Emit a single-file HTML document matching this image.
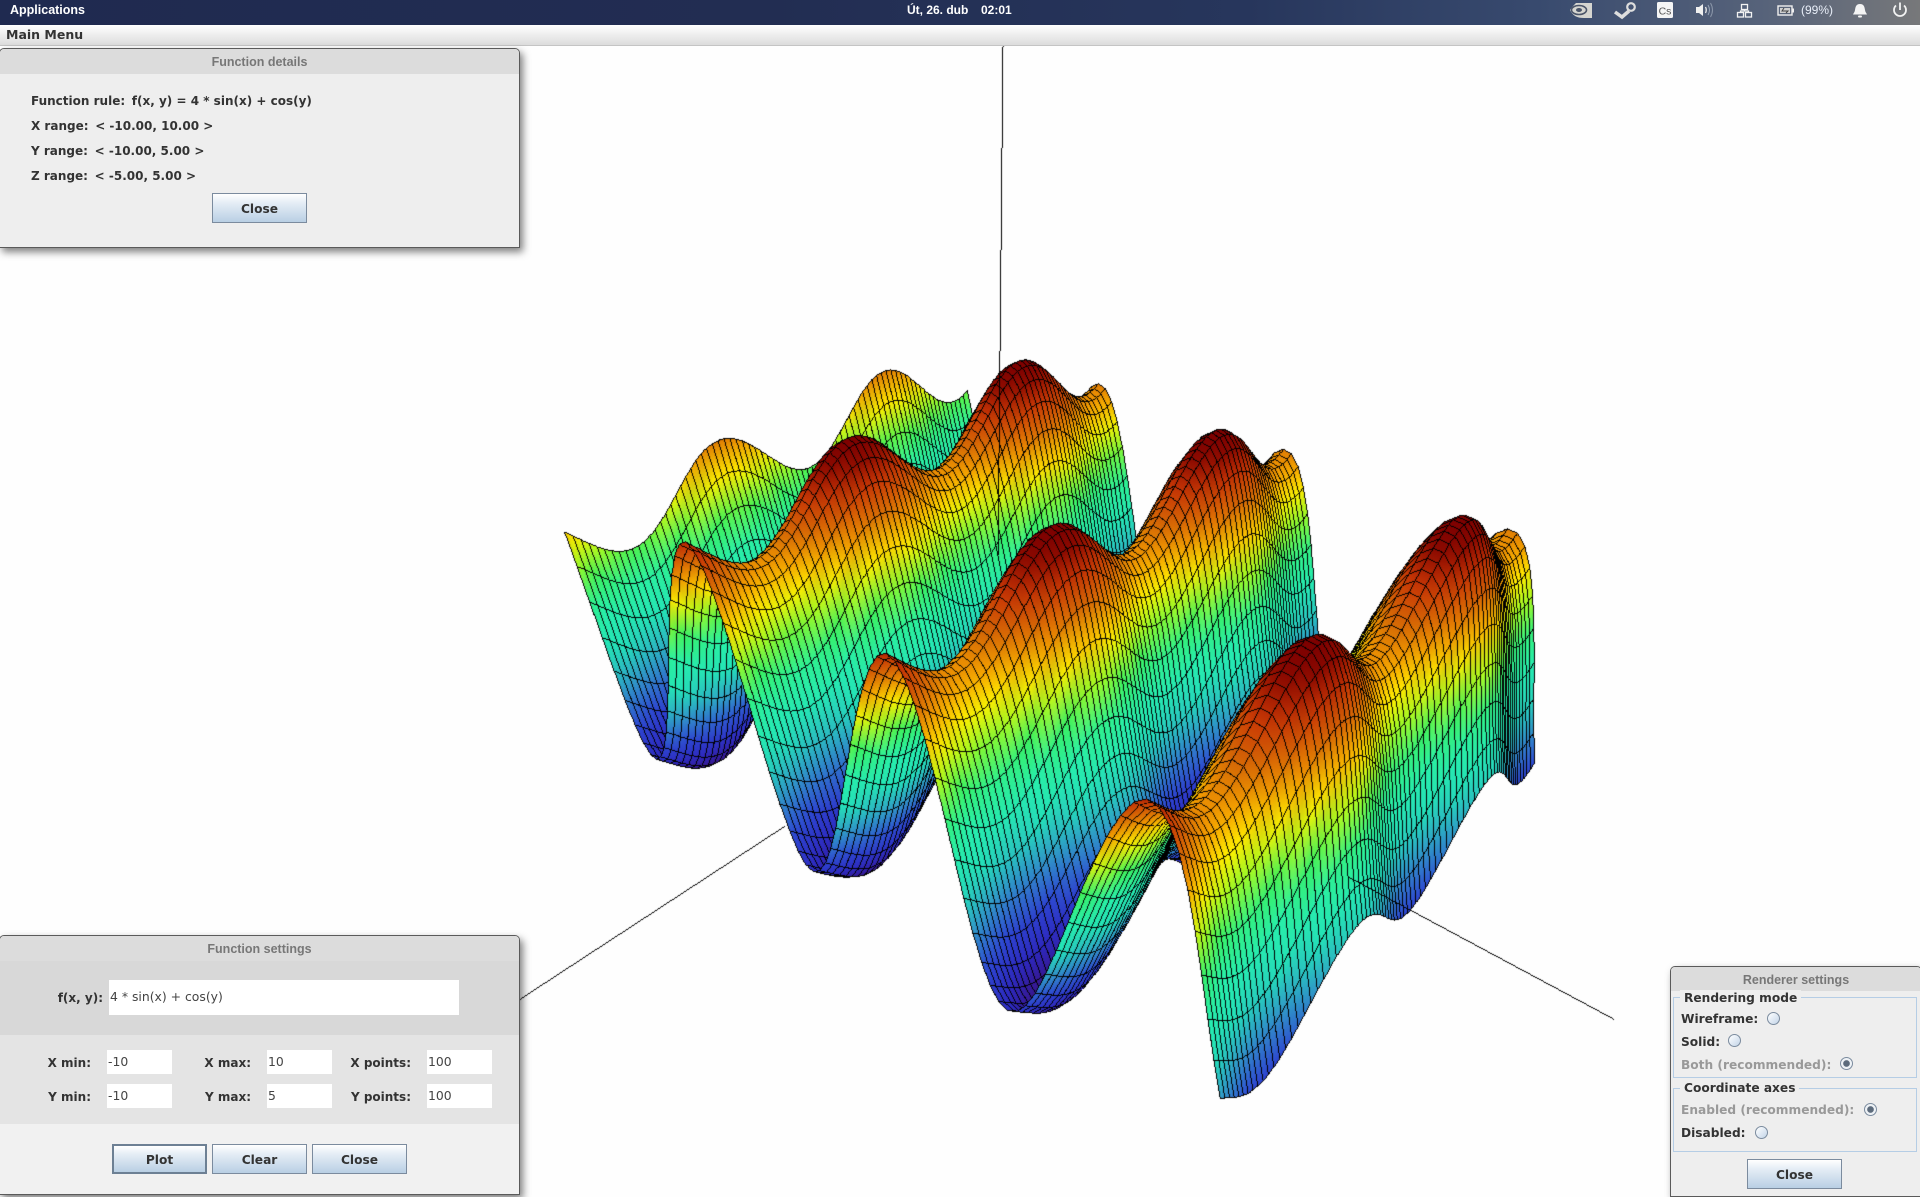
<!DOCTYPE html>
<html lang="cs"><head><meta charset="utf-8"><title>Function plotter</title>
<style>
html,body{margin:0;padding:0;width:1920px;height:1195px;overflow:hidden;background:#fefefe}
*{box-sizing:border-box}
canvas{position:absolute;left:0;top:0}
.a{position:absolute;white-space:nowrap}
#bar{left:0;top:0;width:1920px;height:25px;background:linear-gradient(90deg,#1f2a50 0,#222d52 40%,#27365c 65%,#384a6e 80%,#57637a 92%,#77787a 100%)}
.t{position:absolute;font:bold 12px/20px "Liberation Sans",sans-serif;color:#fff;white-space:nowrap}
#menu{left:0;top:25px;width:1920px;height:21px;background:linear-gradient(#fff,#dcdcdc);border-bottom:1px solid #c4c4c4}
.d{position:absolute;font:bold 12.2px/20px "DejaVu Sans",sans-serif;color:#333;white-space:nowrap}
.d span{margin-left:2.500px}
.p{position:absolute;background:#eee;border:1px solid #5a5a5a;border-radius:5px 5px 0 0;box-shadow:3px 4px 8px rgba(0,0,0,.5);overflow:hidden}
.tt{position:absolute;left:0;top:0;width:100%;height:25px;background:#dcdcdc;text-align:center;font:bold 12.5px/26px "Liberation Sans",sans-serif;color:#777}
.b{position:absolute;background:linear-gradient(#fff 0,#e6eef6 30%,#b9cfe4 100%);border:1px solid #7b8b9e;text-align:center;font:bold 12.2px/30px "DejaVu Sans",sans-serif;color:#333}
.i{position:absolute;background:#fff;font:12.4px/24px "DejaVu Sans",sans-serif;color:#444;padding-left:1px;white-space:nowrap}
.r{position:absolute;width:13px;height:13px;border-radius:50%;border:1px solid #7b8b9e;background:linear-gradient(135deg,#fff,#c3d5e8)}
.r.s{background:radial-gradient(circle,#5c6b7c 0,#5c6b7c 3px,#eef2f6 3.6px)}
.g{position:absolute;border:1px solid #b5cde5}
.sec{position:absolute;left:0;width:100%}
</style></head><body>
<canvas id="c" width="1920" height="1195"></canvas>

<div class="a" id="bar"></div>
<div class="t" style="left:10px;top:0;font-size:12.5px">Applications</div>
<div class="t" style="left:907px;top:0">Út, 26. dub</div>
<div class="t" style="left:981px;top:0">02:01</div>
<div class="t" style="left:1801px;top:0;font-weight:normal;color:#e8eef8">(99%)</div>
<svg class="a" style="left:1560px;top:0" width="360" height="25" viewBox="0 0 360 25">
 <path d="M16 3 H32 V18 H24 C17 18 13 16 10 10 C12 7 14 5 16 3Z" fill="#d5d5d0"/>
 <ellipse cx="19" cy="10" rx="7.500" ry="4.500" fill="none" stroke="#4a5468" stroke-width="1.600"/>
 <ellipse cx="19" cy="10" rx="3" ry="2" fill="#4a5468"/>
 <path d="M55 12 L62 17 L69 11" fill="none" stroke="#dedede" stroke-width="3.500"/><circle cx="71" cy="7" r="3.800" fill="none" stroke="#dedede" stroke-width="2.200"/>
 <rect x="97" y="2" width="16" height="16" rx="1.500" fill="#f5f5f5"/><text x="105" y="14.500" text-anchor="middle" font-family="Liberation Sans,sans-serif" font-size="10.500" fill="#555">Cs</text>
 <path d="M136 7 H139 L143 4 V16 L139 13 H136Z" fill="#f0f0f0"/><path d="M145.500 7 Q147 10 145.500 13" fill="none" stroke="#e8e8e8" stroke-width="1.300"/><path d="M148 5 Q151 10 148 15" fill="none" stroke="#9aa6b8" stroke-width="1"/><path d="M150.500 3 Q154.500 10 150.500 17" fill="none" stroke="#8a96a8" stroke-width="1"/>
 <g fill="none" stroke="#f2f2f2" stroke-width="1.300"><rect x="181.500" y="4.500" width="6" height="5"/><rect x="177.500" y="12.500" width="6" height="4.500"/><rect x="185.500" y="12.500" width="6" height="4.500"/><path d="M184.500 9.500 V11 M180.500 12.500 V11 H188.500 V12.500"/></g>
 <rect x="218" y="6" width="14" height="9" fill="none" stroke="#f0f0f0" stroke-width="1.400"/><rect x="232" y="8.500" width="2" height="4" fill="#f0f0f0"/><rect x="220" y="8" width="10" height="5" fill="#d0d0d0"/><path d="M224 8 L222 11 H228 L226 13" fill="none" stroke="#444" stroke-width="1"/>
 <path d="M300 4 C296 4 295.500 7 295 10 C294.800 12 293.500 13 293 14.500 H307 C306.500 13 305.200 12 305 10 C304.500 7 304 4 300 4Z" fill="#f4f4f4"/><rect x="298" y="15.500" width="4" height="2" rx="1" fill="#f4f4f4"/>
 <path d="M336 5.500 A6 6 0 1 0 344 5.500" fill="none" stroke="#f2f2f2" stroke-width="1.800"/><path d="M340 2.500 V10" stroke="#f2f2f2" stroke-width="1.800"/>
</svg>

<div class="a" id="menu"></div>
<div class="d" style="left:6px;top:25px;font-size:12.500px">Main Menu</div>

<!-- Function details -->
<div class="p" style="left:-1px;top:48px;width:521px;height:200px">
 <div class="tt">Function details</div>
</div>
<div class="d" style="left:31px;top:91px;font-size:12px">Function rule:<span> f(x, y) = 4 * sin(x) + cos(y)</span></div>
<div class="d" style="left:31px;top:116px;font-size:12px">X range:<span> &lt; -10.00, 10.00 &gt;</span></div>
<div class="d" style="left:31px;top:141px;font-size:12px">Y range:<span> &lt; -10.00, 5.00 &gt;</span></div>
<div class="d" style="left:31px;top:166px;font-size:12px">Z range:<span> &lt; -5.00, 5.00 &gt;</span></div>
<div class="b" style="left:212px;top:193px;width:95px;height:30px">Close</div>

<!-- Function settings -->
<div class="p" style="left:-1px;top:935px;width:521px;height:260px;background:#f1f1f1">
 <div class="sec" style="top:24px;height:75px;background:#d8d8d8"></div>
 <div class="sec" style="top:99px;height:89px;background:#e4e4e4"></div>
 <div class="tt">Function settings</div>
</div>
<div class="d" style="right:1817px;top:988px;font-size:12px">f(x, y):</div>
<div class="i" style="left:109px;top:980px;width:350px;height:35px;line-height:34px">4 * sin(x) + cos(y)</div>
<div class="d" style="right:1829px;top:1053px;font-size:12px">X min:</div><div class="i" style="left:107px;top:1050px;width:65px;height:24px">-10</div>
<div class="d" style="right:1669px;top:1053px;font-size:12px">X max:</div><div class="i" style="left:267px;top:1050px;width:65px;height:24px">10</div>
<div class="d" style="right:1509px;top:1053px;font-size:12px">X points:</div><div class="i" style="left:427px;top:1050px;width:65px;height:24px">100</div>
<div class="d" style="right:1829px;top:1087px;font-size:12px">Y min:</div><div class="i" style="left:107px;top:1084px;width:65px;height:24px">-10</div>
<div class="d" style="right:1669px;top:1087px;font-size:12px">Y max:</div><div class="i" style="left:267px;top:1084px;width:65px;height:24px">5</div>
<div class="d" style="right:1509px;top:1087px;font-size:12px">Y points:</div><div class="i" style="left:427px;top:1084px;width:65px;height:24px">100</div>
<div class="b" style="left:112px;top:1144px;width:95px;height:30px;border:2px solid #6d8094;line-height:28px">Plot</div>
<div class="b" style="left:212px;top:1144px;width:95px;height:30px">Clear</div>
<div class="b" style="left:312px;top:1144px;width:95px;height:30px">Close</div>

<!-- Renderer settings -->
<div class="p" style="left:1670px;top:966px;width:252px;height:231px">
 <div class="tt" style="height:24px">Renderer settings</div>
</div>
<div class="g" style="left:1673px;top:997px;width:244px;height:81px"></div>
<div class="d" style="left:1680px;top:990px;height:16px;line-height:16px;background:#eee;padding:0 4px">Rendering mode</div>
<div class="d" style="left:1681px;top:1009px">Wireframe:</div><div class="r" style="left:1767px;top:1012px"></div>
<div class="d" style="left:1681px;top:1032px">Solid:</div><div class="r" style="left:1728px;top:1034px"></div>
<div class="d" style="left:1681px;top:1055px;color:#999">Both (recommended):</div><div class="r s" style="left:1840px;top:1057px"></div>
<div class="g" style="left:1673px;top:1088px;width:244px;height:64px"></div>
<div class="d" style="left:1680px;top:1080px;height:16px;line-height:16px;background:#eee;padding:0 4px">Coordinate axes</div>
<div class="d" style="left:1681px;top:1100px;color:#999">Enabled (recommended):</div><div class="r s" style="left:1864px;top:1103px"></div>
<div class="d" style="left:1681px;top:1123px">Disabled:</div><div class="r" style="left:1755px;top:1126px"></div>
<div class="b" style="left:1747px;top:1159px;width:95px;height:30px">Close</div>

<script>
(function(){
var S=1920/1568;
var L=[
[-10,5,2.46,460,436],[-4.712,5,4.284,558,444],[1.571,5,4.284,721,534],[7.854,5,4.284,930,652],[10,5,-1.892,993,898],[10,5,-1.892,993,898],[10,5,-1.892,993,898],
[-7.854,5,-3.716,537,610],[-1.571,5,-3.716,667.6,712],[4.712,5,-3.716,830.5,826],
[-10,3.142,1.176,510,450],[-10,0,3.176,590,360],[-10,-3.142,1.176,655,383],[-10,-6.283,3.176,723,303],[-10,-9.425,1.176,776,329],[-10,-10,1.337,790,319],
[10,-2.31,-2.85,1139,755],[10,-0.83,-1.5,1121,749],[10,-9,-3.087,1238,643],[10,-10,-3.015,1256,620],[10,-10,-3.015,1256,620],
[-4.712,0,5,703,358],[-4.712,-6.283,5,838,295],[-4.712,-10,3.161,898,314],
[1.571,0,5,866,430],[1.571,-6.283,5,995,352],[1.571,-10,3.161,1045,368],
[7.854,0,5,1075,519],[7.854,-6.283,5,1194,422],[7.854,-10,3.161,1231,433],
[0,0,0,814,561]];
var n=11,i,j,k,A=[],B=[];
for(i=0;i<n;i++){A.push(new Array(n).fill(0));B.push(0);}
function add(r,t){for(var a=0;a<n;a++){B[a]+=r[a]*t;for(var b=0;b<n;b++)A[a][b]+=r[a]*r[b];}}
L.forEach(function(q){
 var X=q[0]/10,Y=q[1]/10,Z=q[2]/5,U=(q[3]*S-1000)/500,V=(q[4]*S-600)/500;
 add([X,Y,Z,1,0,0,0,0,-U*X,-U*Y,-U*Z],U);
 add([0,0,0,0,X,Y,Z,1,-V*X,-V*Y,-V*Z],V);
});
for(i=0;i<n;i++){
 var m=i;for(j=i+1;j<n;j++)if(Math.abs(A[j][i])>Math.abs(A[m][i]))m=j;
 var tmp=A[i];A[i]=A[m];A[m]=tmp;tmp=B[i];B[i]=B[m];B[m]=tmp;
 for(j=i+1;j<n;j++){var f=A[j][i]/A[i][i];for(k=i;k<n;k++)A[j][k]-=f*A[i][k];B[j]-=f*B[i];}
}
var p=new Array(n);
for(i=n-1;i>=0;i--){var s=B[i];for(k=i+1;k<n;k++)s-=A[i][k]*p[k];p[i]=s/A[i][i];}
function proj(x,y,z){
 var X=x/10,Y=y/10,Z=z/5,d=p[8]*X+p[9]*Y+p[10]*Z+1;
 return [(p[0]*X+p[1]*Y+p[2]*Z+p[3])/d*500+1000,(p[4]*X+p[5]*Y+p[6]*Z+p[7])/d*500+600,1/d];
}
var stops=[[-5,60,15,120],[-4,45,40,190],[-3,45,70,210],[-2,50,150,200],[-1,35,225,185],[0.2,40,240,170],[1.1,60,240,90],[1.6,170,250,30],[2.2,255,240,0],[2.8,245,160,0],[3.3,215,110,5],[4,200,55,5],[4.6,140,10,0],[5,125,0,0]];
function col(z){
 for(var i=1;i<stops.length;i++)if(z<=stops[i][0]){var a=stops[i-1],b=stops[i],t=(z-a[0])/(b[0]-a[0]);if(t<0)t=0;return [a[1]+(b[1]-a[1])*t,a[2]+(b[2]-a[2])*t,a[3]+(b[3]-a[3])*t];}
 return [125,0,0];
}
var W=1920,H=1195,cv=document.getElementById('c'),ctx=cv.getContext('2d'),img=ctx.createImageData(W,H),D=img.data,zb=new Float32Array(W*H);
for(i=0;i<D.length;i++)D[i]=254;
for(i=3;i<D.length;i+=4)D[i]=255;
function tri(a,b,c,ca,cb,cc){
 var x0=Math.max(0,Math.floor(Math.min(a[0],b[0],c[0]))),x1=Math.min(W-1,Math.ceil(Math.max(a[0],b[0],c[0])));
 var y0=Math.max(0,Math.floor(Math.min(a[1],b[1],c[1]))),y1=Math.min(H-1,Math.ceil(Math.max(a[1],b[1],c[1])));
 var ar=(b[0]-a[0])*(c[1]-a[1])-(b[1]-a[1])*(c[0]-a[0]);
 if(Math.abs(ar)<1e-7)return;
 for(var y=y0;y<=y1;y++)for(var x=x0;x<=x1;x++){
  var px=x+.5,py=y+.5;
  var w2=((b[0]-a[0])*(py-a[1])-(b[1]-a[1])*(px-a[0]))/ar;
  var w1=((px-a[0])*(c[1]-a[1])-(py-a[1])*(c[0]-a[0]))/ar;
  var w0=1-w1-w2;
  if(w0<-.001||w1<-.001||w2<-.001)continue;
  var iw=w0*a[2]+w1*b[2]+w2*c[2],o=y*W+x;
  if(iw<=zb[o])continue;
  zb[o]=iw;o*=4;
  D[o]=w0*ca[0]+w1*cb[0]+w2*cc[0];
  D[o+1]=w0*ca[1]+w1*cb[1]+w2*cc[1];
  D[o+2]=w0*ca[2]+w1*cb[2]+w2*cc[2];
 }
}
function line(a,b,bias){
 var dx=b[0]-a[0],dy=b[1]-a[1],st=Math.ceil(Math.max(Math.abs(dx),Math.abs(dy)));
 if(st<1)st=1;
 for(var t=0;t<=st;t++){
  var f=t/st,x=Math.floor(a[0]+dx*f),y=Math.floor(a[1]+dy*f);
  if(x<0||y<0||x>=W||y>=H)continue;
  var iw=a[2]+(b[2]-a[2])*f+bias,o=y*W+x;
  if(iw<zb[o])continue;
  zb[o]=iw;o*=4;D[o]=D[o+1]=D[o+2]=0;
 }
}
var NX=81,NY=76,G=[],C=[];
for(i=0;i<NX;i++){G.push([]);C.push([]);
 var x=-10+20*i/(NX-1);
 for(j=0;j<NY;j++){var y=-10+15*j/(NY-1),z=4*Math.sin(x)+Math.cos(y);G[i].push(proj(x,y,z));C[i].push(col(z));}
}
for(i=0;i<NX-1;i++)for(j=0;j<NY-1;j++){
 tri(G[i][j],G[i+1][j],G[i+1][j+1],C[i][j],C[i+1][j],C[i+1][j+1]);
 tri(G[i][j],G[i+1][j+1],G[i][j+1],C[i][j],C[i+1][j+1],C[i][j+1]);
}
var BI=.0025;
for(i=0;i<NX;i++)for(j=0;j<NY;j++){
 if(i<NX-1)line(G[i][j],G[i+1][j],BI);
 if(j<NY-1)line(G[i][j],G[i][j+1],BI);
}
var INF=1e9;
line([1003,46,INF],[998,554,INF],0);
line([784,826.5,INF],[520,999,INF],0);
line([1348,877,INF],[1613,1019,INF],0);
ctx.putImageData(img,0,0);
})();
</script>
</body></html>
